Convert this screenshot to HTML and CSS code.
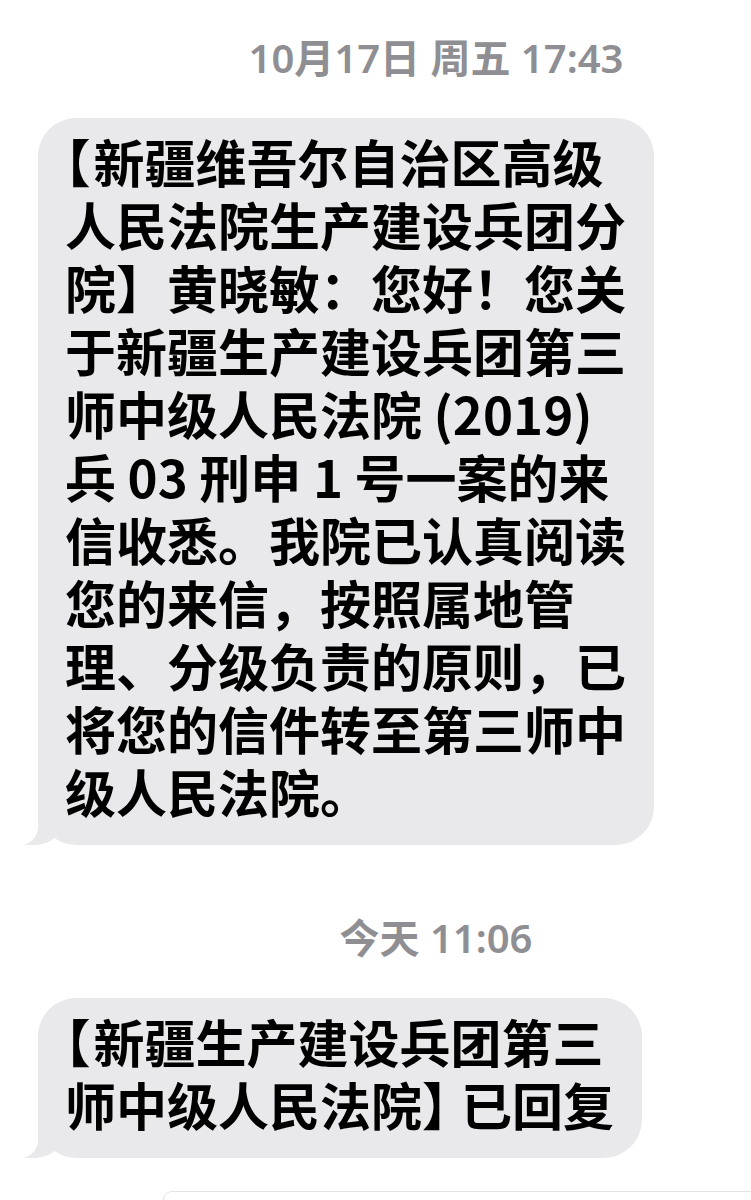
FILE: index.html
```html
<!DOCTYPE html>
<html lang="zh-CN">
<head>
<meta charset="utf-8">
<title>短信</title>
<link rel="stylesheet" href="styles.css">
</head>
<body>
<div class="thread">
  <div class="stamp">10月17日 周五 17:43</div>
  <div class="bubble bubble-long"><span class="open-bracket">【</span>新疆维吾尔自治区高级<br>人民法院生产建设兵团分<br>院】黄晓敏：您好！您关<br>于新疆生产建设兵团第三<br>师中级人民法院 (2019)<br>兵 03 刑申 1 号一案的来<br>信收悉。我院已认真阅读<br>您的来信，按照属地管<br>理、分级负责的原则，已<br>将您的信件转至第三师中<br>级人民法院。</div>
  <div class="stamp stamp-second">今天 11:06</div>
  <div class="bubble bubble-short"><span class="open-bracket">【</span>新疆生产建设兵团第三<br>师中级人民法院<span class="close-bracket">】</span>已回复</div>
  <div class="next-bubble"></div>
</div>
</body>
</html>
```
FILE: styles.css
```css
html, body {
  margin: 0;
  padding: 0;
  background: #ffffff;
  overflow: hidden;
}

.thread {
  display: flex;
  flex-direction: column;
  align-items: flex-start;
  padding-left: 38px;
  height: 1200px;
  overflow: hidden;
}

.stamp {
  align-self: stretch;
  padding-left: 83px;
  padding-top: 35px;
  text-align: center;
  font-family: "Noto Sans", "Noto Sans CJK SC", sans-serif;
  font-size: 40px;
  font-weight: 600;
  line-height: 46px;
  color: #8e8e93;
}

.stamp-second {
  padding-top: 70px;
}

.bubble {
  position: relative;
  box-sizing: border-box;
  margin-top: 37px;
  padding: 12px 20px 22px 27px;
  background: #e9e9eb;
  border-radius: 38px;
  font-family: "Noto Sans CJK SC", sans-serif;
  font-size: 51px;
  font-weight: 700;
  line-height: 63px;
  color: #000000;
  white-space: nowrap;
}

.open-bracket {
  font-feature-settings: "halt" 1;
  margin-right: 3px;
}

.close-bracket {
  margin-right: -12px;
}

.bubble-long {
  width: 616px;
}

.bubble-short {
  width: 604px;
}

.bubble::before {
  content: "";
  position: absolute;
  left: -14px;
  bottom: 0;
  width: 40px;
  height: 36px;
  background: #e9e9eb;
  border-bottom-right-radius: 28px;
}

.bubble::after {
  content: "";
  position: absolute;
  left: -24px;
  bottom: 0;
  width: 24px;
  height: 38px;
  background: #ffffff;
  border-bottom-right-radius: 18px;
}

.next-bubble {
  margin-top: 33px;
  margin-left: 125px;
  align-self: stretch;
  height: 60px;
  border-top: 1px solid #e4e4e6;
  border-left: 1px solid #e4e4e6;
  border-top-left-radius: 34px;
}
```
